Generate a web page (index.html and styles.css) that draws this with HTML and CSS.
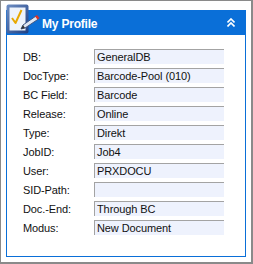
FILE: index.html
```html
<!DOCTYPE html>
<html lang="de">
<head>
    <meta charset="UTF-8">
    <title>My Profile</title>
    <link rel="stylesheet" href="styles.css">
</head>
<body>
    <div class="window">
        <div class="panel">
            <div class="panel-head">
                <svg class="head-icon" width="34" height="31" viewBox="0 0 34 31">
                    <defs>
                        <linearGradient id="frame" x1="0" y1="0" x2="1" y2="1">
                            <stop offset="0" stop-color="#6f8fc4"/>
                            <stop offset="1" stop-color="#1f3f82"/>
                        </linearGradient>
                    </defs>
                    <rect x="0.5" y="0.5" width="22" height="29" rx="2" fill="url(#frame)"/>
                    <rect x="3.5" y="3.5" width="16" height="23" fill="#eef3fb"/>
                    <polyline points="6,14 9.5,19 15.5,6" fill="none" stroke="#e8a800" stroke-width="2" stroke-linejoin="round"/>
                    <polygon points="15,25 17,21 30,12 32.5,15 19,24" fill="#dfe6f2" stroke="#3f5683" stroke-width="1"/>
                    <polygon points="29,12.5 31,11 33.5,14 31.5,15.5" fill="#d9342b"/>
                    <polygon points="15,25 17,21 19,24" fill="#333"/>
                </svg>
                <span class="head-title">My Profile</span>
                <svg class="collapse" width="8" height="9" viewBox="0 0 8 9">
                    <polyline points="0.5,4.5 4,1 7.5,4.5" fill="none" stroke="#fff" stroke-width="1.6"/>
                    <polyline points="0.5,8.5 4,5 7.5,8.5" fill="none" stroke="#fff" stroke-width="1.6"/>
                </svg>
            </div>
            <div class="panel-body">
                <div class="row"><span class="label">DB:</span><span class="field">GeneralDB</span></div>
                <div class="row"><span class="label">DocType:</span><span class="field">Barcode-Pool (010)</span></div>
                <div class="row"><span class="label">BC Field:</span><span class="field">Barcode</span></div>
                <div class="row"><span class="label">Release:</span><span class="field">Online</span></div>
                <div class="row"><span class="label">Type:</span><span class="field">Direkt</span></div>
                <div class="row"><span class="label">JobID:</span><span class="field">Job4</span></div>
                <div class="row"><span class="label">User:</span><span class="field">PRXDOCU</span></div>
                <div class="row"><span class="label">SID-Path:</span><span class="field"></span></div>
                <div class="row"><span class="label">Doc.-End:</span><span class="field">Through BC</span></div>
                <div class="row"><span class="label">Modus:</span><span class="field">New Document</span></div>
            </div>
        </div>
    </div>
</body>
</html>
```

FILE: styles.css
```css
* {
    margin: 0;
    padding: 0;
    box-sizing: border-box;
    font-family: "Liberation Sans", Arial, sans-serif;
}
body {
    background: #fff;
    width: 253px;
    height: 264px;
}
.window {
    width: 253px;
    height: 264px;
    border: 1px solid #8a8a8a;
    border-right-width: 2px;
    border-bottom-width: 2px;
    padding: 9px 5px 5px 5px;
}
.panel {
    height: 247px;
    display: flex;
    flex-direction: column;
}
.panel-head {
    position: relative;
    height: 25px;
    background: #0a6fd8;
    display: flex;
    align-items: center;
    padding-left: 36px;
    padding-right: 11px;
}
.head-icon {
    position: absolute;
    left: 0;
    top: -6px;
}
.head-title {
    flex: 1;
    color: #fff;
    font-weight: bold;
    font-size: 12px;
    letter-spacing: -0.2px;
    padding-top: 2px;
}
.collapse {
    display: block;
}
.panel-body {
    flex: 1;
    border: 1px solid #0a6fd8;
    border-top: none;
    padding: 14px 20px 0 16px;
    display: flex;
    flex-direction: column;
    gap: 4px;
}
.row {
    display: flex;
    align-items: center;
    height: 15px;
}
.label {
    width: 71px;
    font-size: 11px;
    letter-spacing: -0.1px;
    color: #111;
}
.field {
    width: 130px;
    height: 15px;
    background: #eef2fd;
    border-top: 1px solid #a3a3a3;
    border-left: 1px solid #a3a3a3;
    padding-left: 2px;
    font-size: 11px;
    letter-spacing: -0.1px;
    line-height: 14px;
    color: #111;
}
```
